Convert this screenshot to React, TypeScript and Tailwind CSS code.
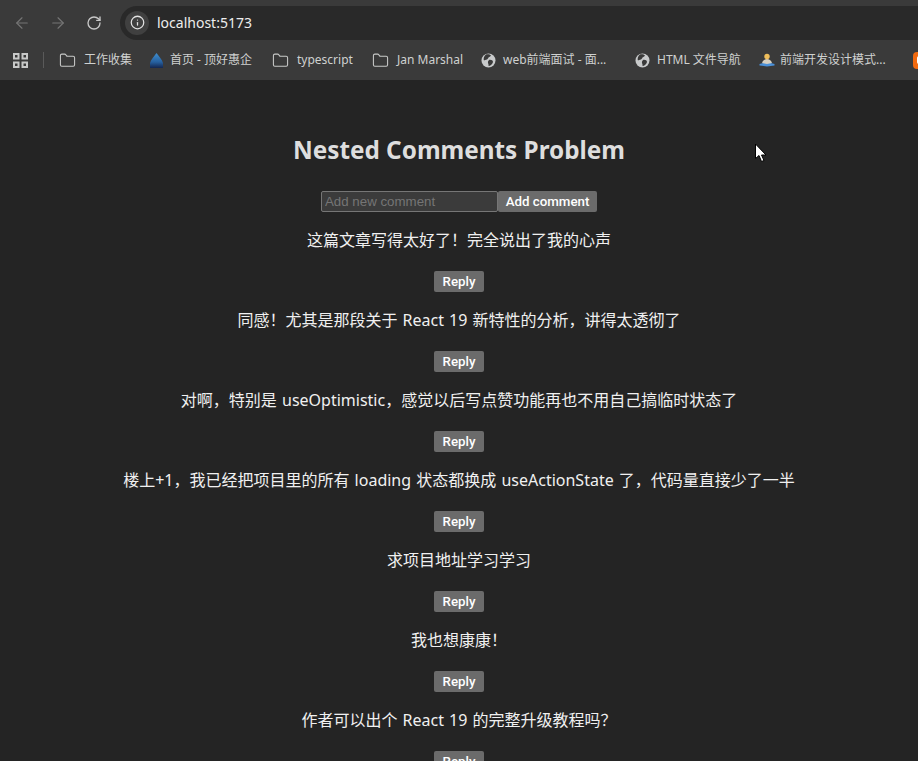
import { ArrowLeft, ArrowRight, RotateCw, Info, Folder } from 'lucide-react'

const comments = [
  '这篇文章写得太好了！完全说出了我的心声',
  '同感！尤其是那段关于 React 19 新特性的分析，讲得太透彻了',
  '对啊，特别是 useOptimistic，感觉以后写点赞功能再也不用自己搞临时状态了',
  '楼上+1，我已经把项目里的所有 loading 状态都换成 useActionState 了，代码量直接少了一半',
  '求项目地址学习学习',
  '我也想康康！',
  '作者可以出个 React 19 的完整升级教程吗？',
]

const uiFont = "font-['Noto_Sans','Noto_Sans_CJK_SC',sans-serif]"

function Bookmark({ icon, label, width, gap = 'gap-[8px]' }: { icon: React.ReactNode; label: string; width: string; gap?: string }) {
  return (
    <div className={`flex shrink-0 items-center ${gap} ${width}`}>
      {icon}
      <span className="whitespace-nowrap text-[12px] text-[#cfd1d0]">{label}</span>
    </div>
  )
}

function GridIcon() {
  return (
    <svg className="shrink-0" width="15" height="15" viewBox="0 0 15 15" fill="none" stroke="#c8c9c8" strokeWidth="2">
      <rect x="1" y="1" width="4.5" height="4.5" />
      <rect x="9.5" y="1" width="4.5" height="4.5" />
      <rect x="1" y="9.5" width="4.5" height="4.5" />
      <rect x="9.5" y="9.5" width="4.5" height="4.5" />
    </svg>
  )
}

function GlobeIcon() {
  return (
    <svg width="15" height="15" viewBox="0 0 15 15">
      <circle cx="7.5" cy="7.5" r="7" fill="#c8cacb" />
      <path d="M5 1.5 C7 1 9 1.5 10 2.5 C9 4 7.5 4 7 5.5 C6.5 7 4 6.5 3 7.5 C2 6 3 3 5 1.5 Z" fill="#3a3a3a" />
      <path d="M8 7 C10 6.5 12 7.5 12 9 C11.5 11 9.5 13 7.5 13 C8 11.5 6.5 10 7 8.5 Z" fill="#3a3a3a" />
    </svg>
  )
}

function SiteLogo() {
  return (
    <svg width="15" height="17" viewBox="0 0 15 17">
      <defs>
        <linearGradient id="dome" x1="0" y1="0" x2="0" y2="1">
          <stop offset="0" stopColor="#3f8fd0" />
          <stop offset="0.6" stopColor="#26609f" />
          <stop offset="1" stopColor="#14264f" />
        </linearGradient>
      </defs>
      <path d="M7.5 1 C9.5 4 13 7 14 11 V16 H1 V11 C2 7 5.5 4 7.5 1 Z" fill="url(#dome)" />
    </svg>
  )
}

function BookLogo() {
  return (
    <svg width="16" height="16" viewBox="0 0 16 16">
      <path d="M0.5 12 L8 10 L15.5 12 L15.5 13.5 L8 14.5 L0.5 13.5 Z" fill="#4a90d9" />
      <path d="M3 11 C4 8 6 7 8 7 C10 7 12 8 13 11 L8 12 Z" fill="#d8d0c0" />
      <circle cx="8" cy="4.5" r="2.7" fill="#eebd5a" />
    </svg>
  )
}

function BrowserBar() {
  return (
    <div className={`h-[80px] shrink-0 overflow-hidden bg-[#3a3a3a] ${uiFont}`}>
      <div className="flex h-[40px] items-center pt-[5px]">
        <div className="flex items-center gap-[18px] pl-[13px] pr-[18px]">
          <ArrowLeft size={18} strokeWidth={1.5} className="text-[#757575]" />
          <ArrowRight size={18} strokeWidth={1.5} className="text-[#757575]" />
          <RotateCw size={16} strokeWidth={2} className="ml-[1px] text-[#c8c8c8]" />
        </div>
        <div className="flex h-[34px] flex-1 items-center rounded-l-[17px] bg-[#292929] pl-[5px]">
          <div className="flex h-[24px] w-[24px] items-center justify-center rounded-full bg-[#404040]">
            <Info size={15} strokeWidth={2} className="text-[#e3e3e3]" />
          </div>
          <span className="ml-[8px] text-[14px] text-[#ededed]">localhost:5173</span>
        </div>
      </div>
      <div className="flex h-[40px] items-center pl-[13px]">
        <GridIcon />
        <div className="ml-[15px] mr-[15px] h-[16px] w-px shrink-0 bg-[#5a5a5a]" />
        <Bookmark width="w-[90px]" icon={<Folder size={17} strokeWidth={1.5} className="text-[#c8c9c8]" />} label="工作收集" />
        <Bookmark width="w-[123px]" gap="gap-[6px]" icon={<SiteLogo />} label="首页 - 顶好惠企" />
        <Bookmark width="w-[100px]" icon={<Folder size={17} strokeWidth={1.5} className="text-[#c8c9c8]" />} label="typescript" />
        <Bookmark width="w-[109px]" icon={<Folder size={17} strokeWidth={1.5} className="text-[#c8c9c8]" />} label="Jan Marshal" />
        <Bookmark width="w-[154px]" gap="gap-[7px]" icon={<GlobeIcon />} label="web前端面试 - 面..." />
        <Bookmark width="w-[124px]" gap="gap-[7px]" icon={<GlobeIcon />} label="HTML 文件导航" />
        <Bookmark width="w-[154px]" gap="gap-[5px]" icon={<BookLogo />} label="前端开发设计模式..." />
        <div className="flex h-[17px] w-[16px] shrink-0 items-center justify-center rounded-[4px] bg-[#f26a0f]">
          <div className="h-[8px] w-[8px] rounded-[2px] bg-white" />
        </div>
      </div>
    </div>
  )
}

export default function App() {
  return (
    <div className="relative flex h-[761px] w-[918px] flex-col overflow-hidden bg-[#242424]">
      <BrowserBar />
      <main className={`flex flex-col items-center text-center ${uiFont}`}>
        <h1 className="mt-[50px] text-[24.3px] leading-[40px] font-bold text-[#dedede]">Nested Comments Problem</h1>
        <div className="mt-[21px] flex h-[21px]">
          <input
            placeholder="Add new comment"
            className="h-[21px] w-[177px] rounded-[2px] border border-[#767676] bg-[#3b3b3b] px-[3px] font-['Liberation_Sans'] text-[13.3px] placeholder:text-[#757575]"
          />
          <button className="h-[21px] w-[99px] rounded-[2px] bg-[#6b6b6b] font-['Roboto'] text-[13.3px] font-medium text-white">
            Add comment
          </button>
        </div>
        <div className="mt-[16px] flex flex-col items-center">
          {comments.map((c) => (
            <div key={c} className="flex h-[80px] flex-col items-center">
              <p className="text-[16px] leading-[24px] whitespace-nowrap text-[#f0f0f0] [word-spacing:1px]">{c}</p>
              <button className="mt-[19px] h-[21px] w-[50px] rounded-[2px] bg-[#6b6b6b] font-['Roboto'] text-[13.3px] font-medium text-white">
                Reply
              </button>
            </div>
          ))}
        </div>
      </main>
      {/* mouse cursor sits over the page */}
      <svg className="absolute left-[754px] top-[143px]" width="13" height="20" viewBox="0 0 13 20">
        <path d="M1.5 1 V15.5 L5 12.5 L7.5 18.5 L10 17.5 L7.5 12 H12 Z" fill="#fff" stroke="#000" strokeWidth="1" />
      </svg>
    </div>
  )
}
